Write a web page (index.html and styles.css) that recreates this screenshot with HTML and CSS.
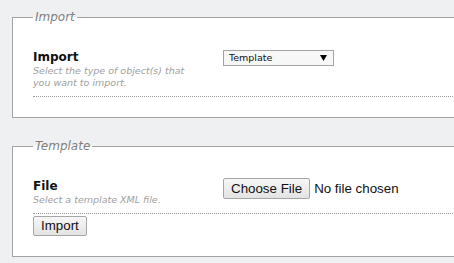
FILE: index.html
```html
<!DOCTYPE html>
<html>
<head>
<meta charset="utf-8">
<link rel="stylesheet" href="styles.css">
</head>
<body>
<div class="page">
  <fieldset class="group">
    <legend class="group-title">Import</legend>
    <div class="row">
      <div class="row-label">
        <div class="label">Import</div>
        <div class="desc">Select the type of object(s) that you want to import.</div>
      </div>
      <div class="row-control">
        <div class="select">
          <span class="select-text">Template</span>
          <svg class="select-arrow" width="7" height="6" viewBox="0 0 7 6"><polygon points="0,0 7,0 3.5,6" fill="#000"/></svg>
        </div>
      </div>
    </div>
  </fieldset>

  <fieldset class="group">
    <legend class="group-title">Template</legend>
    <div class="row">
      <div class="row-label">
        <div class="label">File</div>
        <div class="desc">Select a template XML file.</div>
      </div>
      <div class="row-control">
        <div class="file">
          <button class="btn btn-file" type="button">Choose File</button>
          <span class="file-status">No file chosen</span>
        </div>
      </div>
    </div>
    <button class="btn btn-submit" type="button">Import</button>
  </fieldset>
</div>
</body>
</html>
```

FILE: styles.css
```css
html, body {
  margin: 0;
  padding: 0;
  background: #eff0f2;
  overflow: hidden;
}

body {
  font-family: "DejaVu Sans", Verdana, sans-serif;
  color: #000;
}

.page {
  padding: 10px 0 0 12px;
  display: flex;
  flex-direction: column;
  gap: 21px;
}

.group {
  width: 480px;
  margin: 0;
  padding: 26px 0 20px 20px;
  border: 1px solid #a3a3a3;
  background: #fff;
  box-sizing: border-box;
  min-width: 0;
}

.group-title {
  padding: 0 2px;
  font-size: 12px;
  line-height: 14px;
  font-style: italic;
  color: #7f7f7f;
}

.row {
  display: grid;
  grid-template-columns: 190px 1fr;
  align-items: start;
  padding-bottom: 7px;
  border-bottom: 1px dotted #9a9a9a;
}

.row-label {
  padding-right: 28px;
}

.label {
  font-size: 12px;
  line-height: 15px;
  font-weight: bold;
  color: #111;
}

.desc {
  font-size: 9.5px;
  line-height: 12px;
  font-style: italic;
  color: #a0a0a0;
}

.select {
  width: 111px;
  height: 16px;
  box-sizing: border-box;
  border: 1px solid #a3a3a3;
  background: #f7f7f7;
  display: flex;
  align-items: center;
  justify-content: space-between;
  padding: 0 6px 0 5px;
}

.select-text {
  font-size: 9.5px;
  line-height: 12px;
  color: #111;
}

.select-arrow {
  display: block;
}

.file {
  display: flex;
  align-items: center;
  margin-top: -1px;
}

.btn {
  font-family: "Liberation Sans", Arial, sans-serif;
  font-size: 13.333px;
  line-height: 16px;
  color: #111;
  border: 1px solid #a6a6a6;
  border-radius: 2px;
  background: linear-gradient(#f7f7f7, #e3e3e3);
  padding: 1px 7px;
  margin: 0;
}

.btn-file {
  height: 21px;
}

.file-status {
  font-family: "Liberation Sans", Arial, sans-serif;
  font-size: 13.333px;
  line-height: 16px;
  color: #111;
  margin-left: 4px;
}

.btn-submit {
  align-self: flex-start;
  margin-top: 2px;
  height: 20px;
  padding: 1px 7px;
}
```
